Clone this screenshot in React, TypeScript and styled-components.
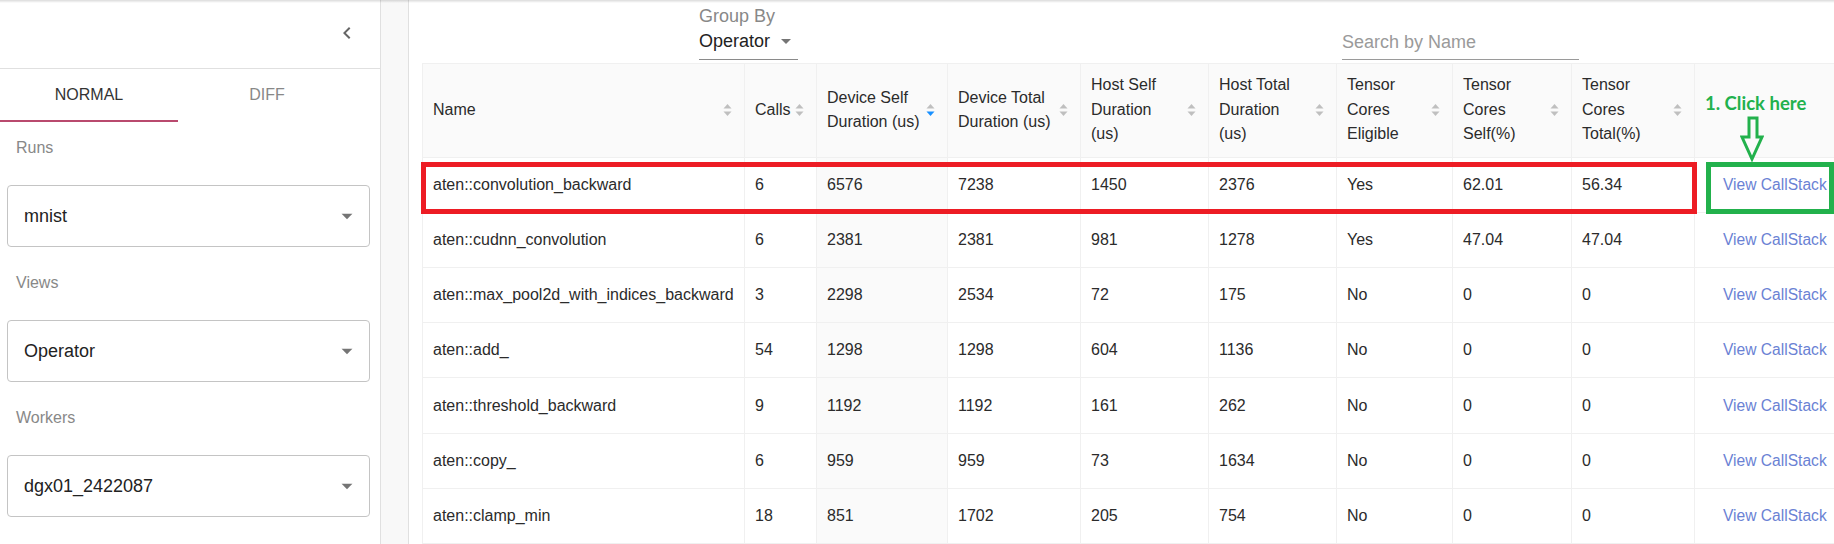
import React from 'react';
import styled, { createGlobalStyle } from 'styled-components';

const GlobalStyle = createGlobalStyle`
  html, body {
    margin: 0;
    padding: 0;
    background: #fff;
  }
  body {
    font-family: "Liberation Sans", Arial, sans-serif;
    color: #2b2b2b;
    overflow: hidden;
  }
`;

const Page = styled.div`
  position: relative;
  display: flex;
  width: 1834px;
  height: 544px;
  overflow: hidden;

  /* app bar shadow along the top edge */
  &::before {
    content: '';
    position: absolute;
    left: 0;
    right: 0;
    top: 0;
    height: 3px;
    background: linear-gradient(rgba(0, 0, 0, 0.14), rgba(0, 0, 0, 0));
    z-index: 5;
  }
`;

// 사이드바
const Sidebar = styled.aside`
  width: 380px;
  flex: none;
  border-right: 1px solid #e0e0e0;
  background: #fff;
  display: flex;
  flex-direction: column;
`;

const SidebarHeader = styled.div`
  height: 69px;
  border-bottom: 1px solid #e0e0e0;
  display: flex;
  justify-content: flex-end;
  align-items: flex-start;
  padding: 21px 21px 0 0;
  box-sizing: border-box;
  color: #666;
`;

const Tabs = styled.div`
  display: flex;
  height: 53px;
`;

const Tab = styled.div<{ $active?: boolean }>`
  width: 178px;
  display: flex;
  align-items: center;
  justify-content: center;
  font-size: 16px;
  text-transform: uppercase;
  color: ${props => (props.$active ? '#333' : '#888')};
  border-bottom: 2px solid ${props => (props.$active ? '#b94a6e' : 'transparent')};
  box-sizing: border-box;
`;

const FieldLabel = styled.div<{ $first?: boolean }>`
  margin-top: ${props => (props.$first ? '17px' : '27px')};
  padding-left: 16px;
  font-size: 16px;
  line-height: 18px;
  color: #888;
`;

const SelectBox = styled.div`
  margin: 28px 10px 0 7px;
  height: 62px;
  box-sizing: border-box;
  border: 1px solid #c4c4c4;
  border-radius: 4px;
  display: flex;
  align-items: center;
  justify-content: space-between;
  padding: 0 9px 0 16px;
  font-size: 18px;
  color: #222;
`;

const Gutter = styled.div`
  width: 27px;
  flex: none;
  background: #f8f8f8;
  border-right: 1px solid #e0e0e0;
`;

// 본문
const Main = styled.main`
  flex: 1;
  min-width: 0;
  padding-left: 13px;
  display: flex;
  flex-direction: column;
  align-items: flex-start;
`;

const Toolbar = styled.div`
  height: 66px;
  width: 100%;
  display: flex;
  align-items: flex-start;
`;

const GroupBy = styled.div`
  margin-left: 277px;
  width: 99px;
`;

const GroupLabel = styled.div`
  margin-top: 5px;
  font-size: 18px;
  line-height: 22px;
  color: #888;
`;

const GroupValue = styled.div`
  display: flex;
  align-items: center;
  justify-content: space-between;
  font-size: 18px;
  line-height: 28px;
  padding-bottom: 4px;
  border-bottom: 1px solid #8a8a8a;
  color: #222;
`;

const Search = styled.div`
  margin: 29px 255px 0 auto;
  width: 237px;
  font-size: 18px;
  line-height: 26px;
  padding-bottom: 4px;
  border-bottom: 1px solid #9a9a9a;
  color: #9a9a9a;
`;

const Table = styled.table`
  border-collapse: collapse;
  table-layout: fixed;
  width: 1433px;
  flex: none;
  font-size: 16px;
`;

const Th = styled.th`
  box-sizing: border-box;
  height: 94px;
  padding: 0 12px 0 10px;
  background: #fafafa;
  border: 1px solid #f0f0f0;
  font-weight: 400;
  text-align: left;
  color: #2b2b2b;
  line-height: 24.5px;
  vertical-align: middle;
`;

const HeadInner = styled.div`
  display: flex;
  align-items: center;
  justify-content: space-between;
`;

const Td = styled.td<{ $sorted?: boolean; $link?: boolean }>`
  box-sizing: border-box;
  height: 55.2px;
  padding: 0 10px 0 ${props => (props.$link ? '28px' : '10px')};
  border: 1px solid #f0f0f0;
  background: ${props => (props.$sorted ? '#fafafa' : '#fff')};
  color: ${props => (props.$link ? '#6a82d4' : '#2b2b2b')};
  font-size: ${props => (props.$link ? '15.6px' : '16px')};
  white-space: nowrap;
  overflow: hidden;
`;

// 주석 (빨간 상자, 초록 상자, 안내 문구)
const Mark = styled.div<{ $color: string; $left: number; $width: number }>`
  position: absolute;
  top: 162px;
  left: ${props => props.$left}px;
  width: ${props => props.$width}px;
  height: 52px;
  border: 5px solid ${props => props.$color};
  box-sizing: border-box;
  pointer-events: none;
`;

const Hint = styled.div`
  position: absolute;
  left: 1705px;
  top: 92px;
  font-family: Lato, "Open Sans", sans-serif;
  font-weight: 700;
  font-size: 18.5px;
  line-height: 22px;
  color: #22b14c;
`;

const HintArrow = styled.svg`
  position: absolute;
  left: 1740px;
  top: 116px;
`;

const Chevron = () => (
  <svg width="24" height="24" viewBox="0 0 24 24" fill="currentColor">
    <path d="M15.41 7.41L14 6l-6 6 6 6 1.41-1.41L10.83 12z" />
  </svg>
);

const DropArrow = ({ size = 26 }: { size?: number }) => (
  <svg width={size} height={size} viewBox="0 0 24 24" fill="rgba(0,0,0,0.54)">
    <path d="M7 10l5 5 5-5z" />
  </svg>
);

const Sorter = ({ down }: { down?: boolean }) => (
  <svg width="9" height="14" viewBox="0 0 9 14" style={{ flex: 'none' }}>
    <polygon points="0.5,5.5 4.5,1 8.5,5.5" fill="#bfbfbf" />
    <polygon points="0.5,8.5 4.5,13 8.5,8.5" fill={down ? '#1890ff' : '#bfbfbf'} />
  </svg>
);

type Column = { key: string; lines: string[]; width: number; sort?: 'none' | 'down' };

const columns: Column[] = [
  { key: 'name', lines: ['Name'], width: 322, sort: 'none' },
  { key: 'calls', lines: ['Calls'], width: 72, sort: 'none' },
  { key: 'dself', lines: ['Device Self', 'Duration (us)'], width: 131, sort: 'down' },
  { key: 'dtotal', lines: ['Device Total', 'Duration (us)'], width: 133, sort: 'none' },
  { key: 'hself', lines: ['Host Self', 'Duration', '(us)'], width: 128, sort: 'none' },
  { key: 'htotal', lines: ['Host Total', 'Duration', '(us)'], width: 128, sort: 'none' },
  { key: 'tce', lines: ['Tensor', 'Cores', 'Eligible'], width: 116, sort: 'none' },
  { key: 'tcs', lines: ['Tensor', 'Cores', 'Self(%)'], width: 119, sort: 'none' },
  { key: 'tct', lines: ['Tensor', 'Cores', 'Total(%)'], width: 123, sort: 'none' },
  { key: 'action', lines: [], width: 161 },
];

const rows: string[][] = [
  ['aten::convolution_backward', '6', '6576', '7238', '1450', '2376', 'Yes', '62.01', '56.34'],
  ['aten::cudnn_convolution', '6', '2381', '2381', '981', '1278', 'Yes', '47.04', '47.04'],
  ['aten::max_pool2d_with_indices_backward', '3', '2298', '2534', '72', '175', 'No', '0', '0'],
  ['aten::add_', '54', '1298', '1298', '604', '1136', 'No', '0', '0'],
  ['aten::threshold_backward', '9', '1192', '1192', '161', '262', 'No', '0', '0'],
  ['aten::copy_', '6', '959', '959', '73', '1634', 'No', '0', '0'],
  ['aten::clamp_min', '18', '851', '1702', '205', '754', 'No', '0', '0'],
];

function Field({ label, value, first }: { label: string; value: string; first?: boolean }) {
  return (
    <>
      <FieldLabel $first={first}>{label}</FieldLabel>
      <SelectBox>
        <span>{value}</span>
        <DropArrow />
      </SelectBox>
    </>
  );
}

export default function App() {
  return (
    <>
      <GlobalStyle />
      <Page>
        <Sidebar>
          <SidebarHeader>
            <Chevron />
          </SidebarHeader>
          <Tabs>
            <Tab $active>Normal</Tab>
            <Tab>Diff</Tab>
          </Tabs>
          <Field label="Runs" value="mnist" first />
          <Field label="Views" value="Operator" />
          <Field label="Workers" value="dgx01_2422087" />
        </Sidebar>
        <Gutter />
        <Main>
          <Toolbar>
            <GroupBy>
              <GroupLabel>Group By</GroupLabel>
              <GroupValue>
                <span>Operator</span>
                <DropArrow size={24} />
              </GroupValue>
            </GroupBy>
            <Search>Search by Name</Search>
          </Toolbar>
          <Table>
            <colgroup>
              {columns.map(col => (
                <col key={col.key} style={{ width: col.width }} />
              ))}
            </colgroup>
            <thead>
              <tr>
                {columns.map(col => (
                  <Th key={col.key}>
                    <HeadInner>
                      <span>
                        {col.lines.map((line, i) => (
                          <React.Fragment key={i}>
                            {i > 0 && <br />}
                            {line}
                          </React.Fragment>
                        ))}
                      </span>
                      {col.sort && <Sorter down={col.sort === 'down'} />}
                    </HeadInner>
                  </Th>
                ))}
              </tr>
            </thead>
            <tbody>
              {rows.map(row => (
                <tr key={row[0]}>
                  {row.map((cell, i) => (
                    <Td key={i} $sorted={i === 2}>
                      {cell}
                    </Td>
                  ))}
                  <Td $link>View CallStack</Td>
                </tr>
              ))}
            </tbody>
          </Table>
        </Main>

        <Mark $color="#ed1c24" $left={421} $width={1276} />
        <Mark $color="#22b14c" $left={1706} $width={128} />
        <Hint>1. Click here</Hint>
        <HintArrow width="24" height="46" viewBox="0 0 24 46">
          <polygon
            points="9,2 17,2 17,21 22,21 12,43 2,21 9,21"
            fill="none"
            stroke="#22b14c"
            strokeWidth="3"
            strokeLinejoin="miter"
          />
        </HintArrow>
      </Page>
    </>
  );
}
